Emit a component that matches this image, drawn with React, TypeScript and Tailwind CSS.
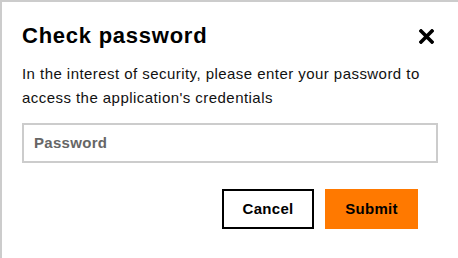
import React from "react";

export default function App() {
  return (
    <div
      className="w-[458px] h-[258px] bg-white border-t-2 border-l-2 border-[#cccccc] pl-5 pt-[20px] overflow-hidden"
      style={{ fontFamily: '"Liberation Sans", Arial, sans-serif' }}
    >
      <div className="w-[416px]">
        <div className="flex items-center justify-between h-[28px]">
          <h1 className="text-[22px] font-bold text-black leading-none tracking-[0.75px]">Check password</h1>
          <button className="w-[16px] h-[16px] flex items-center justify-center mr-[4px]" aria-label="Close">
            <svg width="15" height="15" viewBox="0 0 15 15">
              <path d="M2 2 L13 13 M13 2 L2 13" stroke="#000" strokeWidth="3.6" strokeLinecap="square" />
            </svg>
          </button>
        </div>
        <p className="mt-[12px] text-[15px] leading-[24px] text-[#111] tracking-[0.45px] pr-[8px]">
          In the interest of security, please enter your password to access the application's credentials
        </p>
        <div className="mt-[13px] h-[40px] border-2 border-[#cccccc] flex items-center px-[10px]">
          <span className="text-[15px] font-bold text-[#666666] tracking-[0.3px]">Password</span>
        </div>
        <div className="mt-[26px] flex justify-end gap-[11px] pr-[20px]">
          <button className="w-[92px] h-[40px] border-2 border-black bg-white text-[15px] font-bold text-black tracking-[0.3px]">
            Cancel
          </button>
          <button className="w-[93px] h-[40px] bg-[#ff7900] text-[15px] font-bold text-black tracking-[0.3px]">
            Submit
          </button>
        </div>
      </div>
    </div>
  );
}
